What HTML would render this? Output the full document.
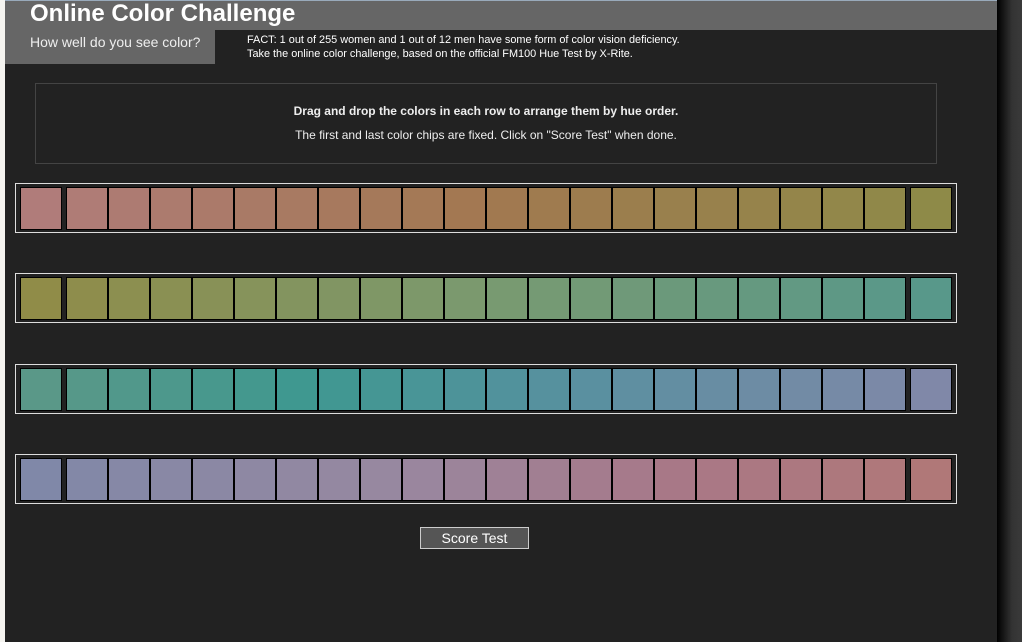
<!DOCTYPE html><html><head><style>
body{margin:0;width:1022px;height:642px;overflow:hidden;background:#f5f4f0;font-family:"Liberation Sans",Arial,sans-serif;position:relative}
#main{position:absolute;left:5px;top:0;width:992px;height:642px;background:#222}
#shadow{position:absolute;left:997px;top:0;width:25px;height:642px;background:linear-gradient(to right,#000,#1a1a1a 30%,#333 60%,#3a3a3a)}
#hdr{position:absolute;left:5px;top:0;width:992px;height:29px;background:#666;border-top:1px solid #9ab}
#hdr h1{margin:0;position:absolute;left:25px;top:-1px;font-size:24px;color:#fff;font-weight:bold;line-height:27px}
#sub{position:absolute;left:5px;top:29px;width:210px;height:35px;background:#666;color:#eee;font-size:14px}
#sub span{position:absolute;left:25px;top:5px}
#fact{position:absolute;left:247px;top:33px;color:#fff;font-size:10.9px;line-height:14px}
#ins{position:absolute;left:35px;top:83px;width:900px;height:79px;border:1px solid #444;color:#eee;text-align:center}
.row{position:absolute;left:15px;width:940px;height:48px;border:1px solid #ddd}
.c{position:absolute;top:3px;width:40px;height:41px;border:1px solid #000}
#btn{position:absolute;left:420px;top:527px;width:107px;height:20px;background:#555;border:1px solid #ccc;color:#fff;font-size:14px;text-align:center;line-height:20px}
</style></head><body>
<div id="main"></div><div id="shadow"></div>
<div id="hdr"><h1>Online Color Challenge</h1></div>
<div id="sub"><span>How well do you see color?</span></div>
<div id="fact">FACT: 1 out of 255 women and 1 out of 12 men have some form of color vision deficiency.<br>Take the online color challenge, based on the official FM100 Hue Test by X-Rite.</div>
<div id="ins"><div style="position:absolute;top:20px;width:100%;font-size:12px;font-weight:bold">Drag and drop the colors in each row to arrange them by hue order.</div><div style="position:absolute;top:44px;width:100%;font-size:12px">The first and last color chips are fixed. Click on "Score Test" when done.</div></div>
<div id="rows"></div>
<div id="btn">Score Test</div>
<script>
var rows=[[183,[[0,'b07c7a'],[.5,'a27850'],[1,'8e8a48']]],[273,[[0,'908c48'],[.5,'7a9a70'],[1,'58988a']]],[364,[[0,'5a9888'],[.3,'3e9890'],[.6,'5890a0'],[1,'8088a8']]],[454,[[0,'8088a8'],[.4,'9888a0'],[.7,'a87888'],[1,'b07878']]]];
function h(s){return [0,2,4].map(i=>parseInt(s.substr(i,2),16))}
function col(st,t){for(var i=0;i<st.length-1;i++){if(t<=st[i+1][0]){var a=h(st[i][1]),b=h(st[i+1][1]),u=(t-st[i][0])/(st[i+1][0]-st[i][0]);return 'rgb('+a.map((v,k)=>Math.round(v+(b[k]-v)*u)).join(',')+')'}}}
var out='';
rows.forEach(function(r){out+='<div class="row" style="top:'+r[0]+'px">';
for(var i=0;i<22;i++){var x=i==0?4:(i==21?894:50+(i-1)*42);out+='<div class="c" style="left:'+x+'px;background:'+col(r[1],i/21)+'"></div>';}
out+='</div>';});
document.getElementById('rows').innerHTML=out;
</script>
</body></html>
